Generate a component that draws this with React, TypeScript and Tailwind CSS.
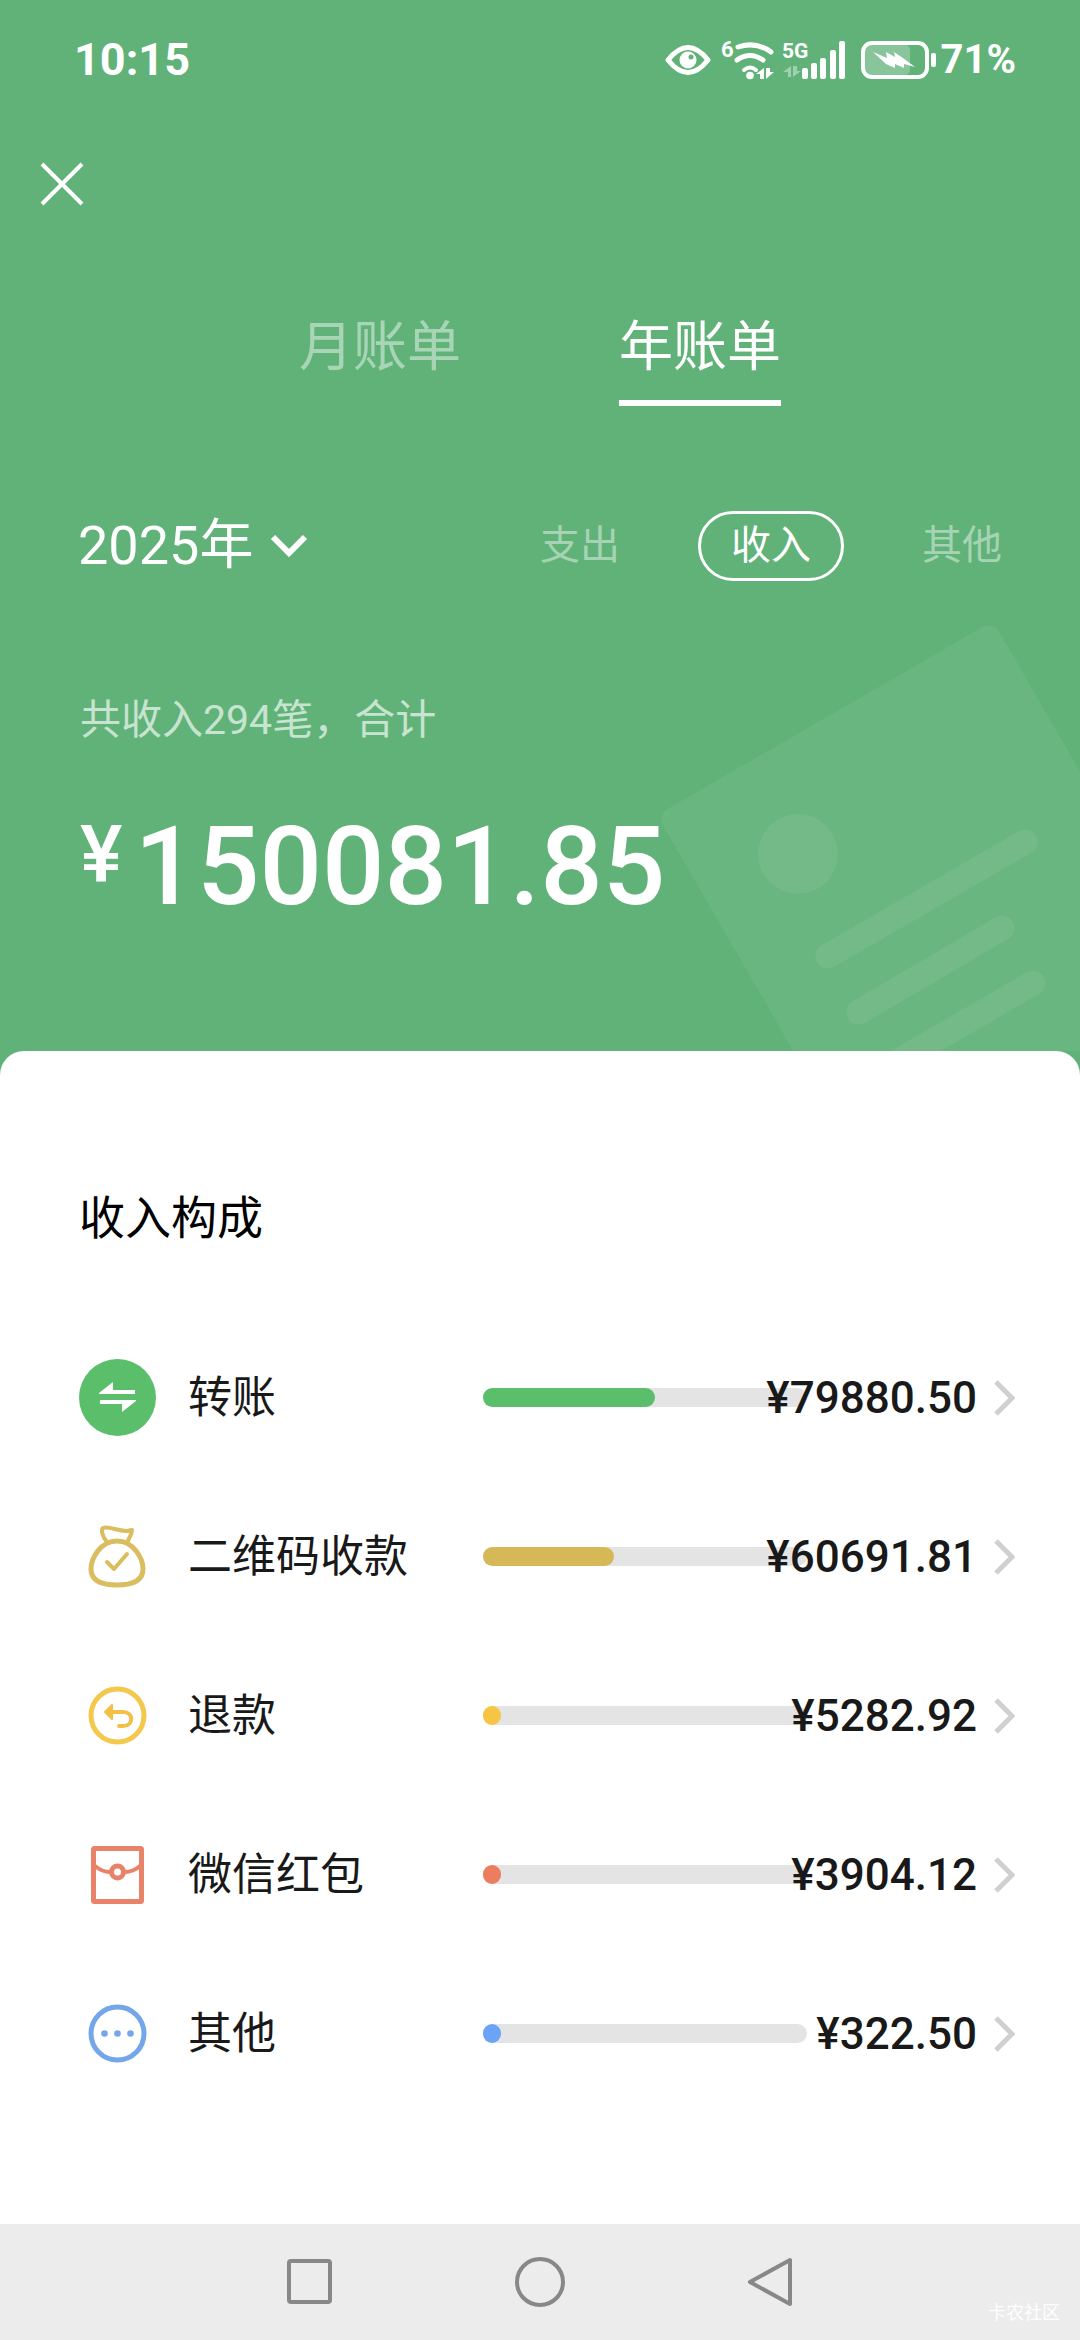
import { ReactNode, useState } from "react";

const TOTAL = 150081.85;

const rows = [
  { name: "转账", amount: "79880.50", color: "bg-[#5bbe6b]", icon: <TransferIcon /> },
  { name: "二维码收款", amount: "60691.81", color: "bg-[#d6b856]", icon: <BagIcon /> },
  { name: "退款", amount: "5282.92", color: "bg-[#f5c543]", icon: <RefundIcon /> },
  { name: "微信红包", amount: "3904.12", color: "bg-[#ed7d5f]", icon: <PacketIcon /> },
  { name: "其他", amount: "322.50", color: "bg-[#6ba3f8]", icon: <MoreIcon /> },
];

const kinds = ["支出", "收入", "其他"];

export default function App() {
  const [period, setPeriod] = useState("年账单");
  const [kind, setKind] = useState("收入");

  return (
    <div className="flex min-h-screen flex-col bg-[#60b278] font-['Roboto','Noto_Sans_CJK_SC',sans-serif] text-white">
      <StatusBar />

      <header className="relative overflow-hidden pt-8">
        <BillArt />

        <div className="relative px-[30px]">
          <button aria-label="关闭" className="flex h-16 w-16 items-center justify-center">
            <svg viewBox="0 0 44 44" className="h-11 w-11" fill="none" stroke="currentColor" strokeWidth="4">
              <path d="M2 2l40 40M42 2L2 42" />
            </svg>
          </button>
        </div>

        {/* Month / year switch */}
        <nav className="relative mt-[92px] flex justify-center gap-[158px]">
          {["月账单", "年账单"].map((p) => (
            <button
              key={p}
              onClick={() => setPeriod(p)}
              className={`border-b-6 pb-3 text-[54px] leading-[80px] ${
                p === period ? "border-white" : "border-transparent text-white/45"
              }`}
            >
              {p}
            </button>
          ))}
        </nav>

        {/* Year and kind filters */}
        <div className="relative mt-[100px] flex items-center justify-between px-[78px]">
          <button className="flex items-center gap-4 text-[54px] leading-[80px]">
            2025年
            <svg viewBox="0 0 40 28" className="h-7 w-10" fill="none" stroke="currentColor" strokeWidth="6">
              <path d="M4 5l16 16L36 5" />
            </svg>
          </button>
          <div className="flex items-center gap-[44px] text-[40px] leading-[64px]">
            {kinds.map((k) => (
              <button
                key={k}
                onClick={() => setKind(k)}
                className={
                  k === kind
                    ? "rounded-full border-3 border-white px-[30px]"
                    : "px-[34px] text-white/45 last:pr-0"
                }
              >
                {k}
              </button>
            ))}
          </div>
        </div>

        {/* Total */}
        <div className="relative px-[80px] pt-[102px] pb-[114px]">
          <p className="text-[41px] leading-[64px] text-white/65">共收入294笔，合计</p>
          <p className="mt-[45px] flex items-start gap-3 font-medium">
            <span className="text-[80px] leading-[116px]">¥</span>
            <span className="text-[110px] leading-[140px]">{TOTAL.toFixed(2)}</span>
          </p>
        </div>
      </header>

      <main className="flex-1 rounded-t-3xl bg-white pt-[132px] pr-[65px] pb-[78px] pl-[79px] text-[#191919]">
        <h2 className="text-[46px] leading-[70px] text-black">收入构成</h2>
        <ul className="mt-[65px]">
          {rows.map((r) => (
            <li key={r.name}>
              <a href="#" className="flex h-[159px] items-center text-[44px] leading-[64px]">
                <span className="mr-8 shrink-0">{r.icon}</span>
                <span className="w-[295px] shrink-0">{r.name}</span>
                <div className="h-[19px] w-[324px] shrink-0 rounded-full bg-[#e4e4e4]">
                  <div
                    className={`h-full min-w-[18px] rounded-full ${r.color}`}
                    style={{ width: `${(Number(r.amount) / TOTAL) * 100}%` }}
                  />
                </div>
                {/* long amounts run back over the end of the bar */}
                <span className="flex min-w-0 flex-1 justify-end font-medium whitespace-nowrap">
                  <span>¥{r.amount}</span>
                </span>
                <svg viewBox="0 0 22 38" className="ml-4 h-[38px] w-[22px] shrink-0" fill="none" stroke="#d0d0d0" strokeWidth="5">
                  <path d="M3 3l16 16L3 35" />
                </svg>
              </a>
            </li>
          ))}
        </ul>
      </main>

      <SystemNav />
    </div>
  );
}

function StatusBar() {
  return (
    <div className="flex h-[120px] items-center justify-between pr-16 pl-[74px] font-bold">
      <span className="text-[45px]">10:15</span>
      <div className="flex items-center">
        <svg viewBox="0 0 46 32" className="mr-2 h-8 w-[46px]">
          <path d="M3 16Q23-9 43 16Q23 41 3 16Z" fill="none" stroke="white" strokeWidth="5" strokeLinejoin="round" />
          <circle cx="23" cy="16" r="8.500" fill="white" />
          <circle cx="26" cy="13" r="2.500" fill="#60b278" />
        </svg>
        <svg viewBox="-4 -8 58 56" className="mr-1 h-14 w-[58px]" fill="none" stroke="white" strokeWidth="5" strokeLinecap="round">
          <text x="-2" y="17" fontSize="22" fill="white" stroke="none">6</text>
          <path d="M15 7Q33 1 48 12M14 20Q27 11 40 20" />
          <path d="M21 30Q27 25 33 30" strokeWidth="4" />
          <g fill="white" stroke="none">
            <circle cx="27" cy="35.500" r="3.800" />
            <path d="M33 34L41 28V39H37V34ZM43 28V39L51 32H47V28Z" />
          </g>
        </svg>
        <svg viewBox="-2 -8 64 54" className="mr-4 h-[54px] w-16" fill="white">
          <text x="-1" y="17" fontSize="21">5G</text>
          <path d="M0 31L8 25V36H5V31ZM10 25V36L18 30H14V25Z" opacity="0.4" />
          <rect x="19" y="27" width="6" height="11" rx="2" />
          <rect x="28" y="22" width="6" height="16" rx="2" />
          <rect x="37" y="17" width="6" height="21" rx="2" />
          <rect x="47" y="9" width="6" height="29" rx="2" />
          <rect x="56" y="0" width="6" height="38" rx="2" />
        </svg>
        <svg viewBox="0 0 76 38" className="mr-1 h-[38px] w-[76px]">
          <rect x="4" y="4" width="45" height="30" rx="5" fill="white" opacity="0.25" />
          <rect x="2" y="2" width="64" height="34" rx="9" fill="none" stroke="white" strokeWidth="4" />
          <rect x="70" y="12" width="5" height="14" rx="2" fill="white" />
          <path d="M12 11L26 17L25 11L34 16L33 11L42 17L54 26L43 23L43 27L34 23L34 27L25 23Z" fill="white" />
        </svg>
        <span className="text-[40px]">71%</span>
      </div>
    </div>
  );
}

function BillArt() {
  return (
    <svg viewBox="0 0 440 451" className="absolute right-0 bottom-0 h-[451px] w-[440px]" fill="none" stroke="#73ba88" strokeWidth="25" strokeLinecap="round">
      <rect width="388" height="520" rx="12" transform="translate(17 215) rotate(-30)" fill="#69b681" stroke="none" />
      <circle cx="158" cy="254" r="40" fill="#73ba88" stroke="none" />
      <path d="M188 356L385 242M219 412L362 328M250 466L393 383" />
    </svg>
  );
}

function IconBox({ children }: { children: ReactNode }) {
  return (
    <svg viewBox="0 0 77 77" className="h-[77px] w-[77px]" fill="none" strokeLinecap="round" strokeLinejoin="round">
      {children}
    </svg>
  );
}

function TransferIcon() {
  return (
    <IconBox>
      <circle cx="38.500" cy="38.500" r="38.500" fill="#5bbe6b" />
      <path d="M20 34L34 23V31H56V35H20ZM57 41V42L43 53V45H21V41Z" fill="white" />
    </IconBox>
  );
}

function BagIcon() {
  return (
    <IconBox>
      <g stroke="#d9bd5f" strokeWidth="5">
        <path d="M38 23C55 23 64 41 64 51C64 63 54 67 38 67S12 63 12 51C12 41 21 23 38 23Z" />
        <path d="M28 24C23 18 22 12 24 10C31 7 42 16 53 12C53 17 50 19 48 25" strokeWidth="4" />
        <path d="M28 44L35 51L48 36" strokeWidth="4" />
      </g>
    </IconBox>
  );
}

function RefundIcon() {
  return (
    <IconBox>
      <circle cx="38.500" cy="38.500" r="26.500" stroke="#f3c84c" strokeWidth="5" />
      <path d="M33 28L26 35L33 42Z" fill="#f3bf45" stroke="#f3bf45" strokeWidth="2" />
      <path d="M29 35H44C55 35 55 49 44 49H40" stroke="#f3bf45" strokeWidth="4" />
    </IconBox>
  );
}

function PacketIcon() {
  return (
    <IconBox>
      <g stroke="#e8836a" strokeWidth="5">
        <rect x="14.500" y="12.500" width="48" height="53" rx="1" />
        <path d="M16 30Q23 36 31 36M46 36Q54 36 61 30" strokeWidth="4" />
        <circle cx="38.500" cy="36" r="6" />
      </g>
    </IconBox>
  );
}

function MoreIcon() {
  return (
    <IconBox>
      <circle cx="38.500" cy="38.500" r="26.500" stroke="#74a6ea" strokeWidth="5" />
      <g fill="#74a6ea">
        <circle cx="25.500" cy="38.500" r="3.300" />
        <circle cx="38.500" cy="38.500" r="3.300" />
        <circle cx="51.500" cy="38.500" r="3.300" />
      </g>
    </IconBox>
  );
}

function SystemNav() {
  return (
    <footer className="relative flex h-[116px] items-center justify-center gap-[178px] bg-[#ececec] text-[#888888]">
      <NavButton label="最近任务">
        <rect x="5" y="5" width="41" height="41" rx="2" />
      </NavButton>
      <NavButton label="主屏幕">
        <circle cx="26" cy="26" r="23" />
      </NavButton>
      <NavButton label="返回">
        <path d="M46 4V48L6 26Z" />
      </NavButton>
      <span className="absolute right-[20px] bottom-[14px] text-[18px] leading-[27px] text-white/90">卡农社区</span>
    </footer>
  );
}

function NavButton({ label, children }: { label: string; children: ReactNode }) {
  return (
    <button aria-label={label}>
      <svg viewBox="0 0 52 52" className="h-[52px] w-[52px]" fill="none" stroke="currentColor" strokeWidth="4" strokeLinejoin="round">
        {children}
      </svg>
    </button>
  );
}
